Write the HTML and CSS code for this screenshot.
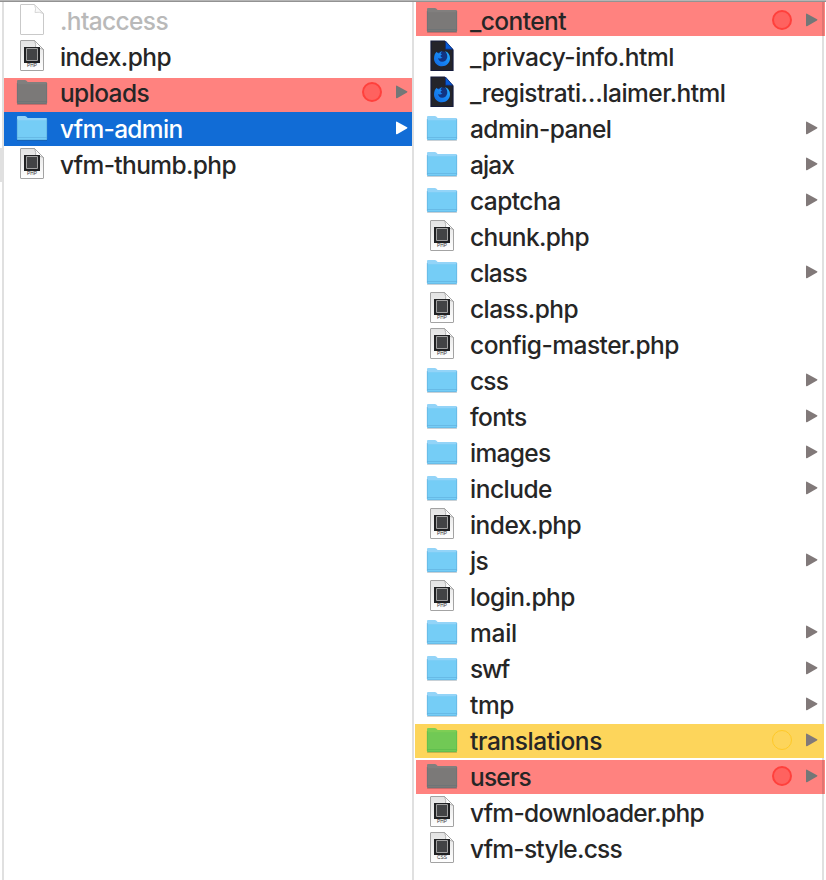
FILE: index.html
```
<!DOCTYPE html>
<html lang="en">
<head>
<meta charset="utf-8">
<title>Files</title>
<link rel="stylesheet" href="styles.css">
</head>
<body>
<svg class="defs" aria-hidden="true">
  <defs>
    <linearGradient id="paper" x1="0" y1="0" x2="0" y2="1"><stop offset="0" stop-color="#e2e2e2"/><stop offset="1" stop-color="#fff"/></linearGradient>
    <linearGradient id="flame" x1="1" y1="0" x2="0" y2="1"><stop offset="0" stop-color="#28b4ff"/><stop offset=".5" stop-color="#1685f4"/><stop offset="1" stop-color="#1267df"/></linearGradient>
    <symbol id="folder" viewBox="0 0 32 36">
      <path class="shade" d="M1 31.500h30v1.300H1z"/>
      <path class="tab" d="M1 31V9Q1 8 2 8h6.800q1 0 1.700.7l1.200 1.300H30q1 0 1 1v20z"/>
      <path class="front" d="M1 12.300h30v18.900q0 .8-1 .8H2q-1 0-1-.8z"/>
      <path class="edge" d="M1 29.500h30M1.500 31.700h29M30.700 11v20M1.300 11v20"/>
    </symbol>
    <symbol id="blank" viewBox="0 0 32 36">
      <path d="M4.500 5q0-.5.500-.5h13.500l9 9V34q0 .5-.5.5H5q-.5 0-.5-.5z" fill="#fff" stroke="#c9c9c9"/>
      <path d="M18.500 4.500q2 4.500.500 8 4.500-1 8 1z" fill="#fafafa" stroke="#d2d2d2" stroke-width=".9"/>
    </symbol>
    <symbol id="doc" viewBox="0 0 32 36">
      <path d="M4.500 5q0-.5.500-.5h13.500l9 9V34q0 .5-.5.5H5q-.5 0-.5-.5z" fill="url(#paper)" stroke="#989898" stroke-width=".9"/>
      <path d="M18.500 4.500q2 4 1 8 4.500-1 8 1z" fill="#fff" stroke="#999" stroke-width=".7"/>
      <path d="M8 11h16v16H8z" fill="#202123"/>
      <path d="M10.500 12.500h11v12h-11z" fill="#424345" stroke="#a2a2a2" stroke-width="1"/>
    </symbol>
    <symbol id="firefox" viewBox="0 0 32 36">
      <path d="M5 5h13.500l8.500 9v20.500H5z" fill="#24242a" stroke="#151b3c" stroke-width="1.200"/>
      <path d="M19.500 5v8.200h7.200z" fill="#075bd8" stroke="#102b77" stroke-width=".7"/>
      <circle cx="16" cy="22.300" r="7" fill="#123482"/>
      <path d="M16 15q-2 1-3 2.500-1.500-.3-2.200-1.800Q8 18 8 22.500c0 4.500 3.600 7.800 8 7.800s8-3.400 8-8c0-4-2.500-6.500-5-7.300 2 2.300 2.600 4.500 2.200 6.500-.6 3-2.900 4.500-5.200 4.300-2.300-.2-3.900-1.900-3.900-3.800 1.500.8 2.700.8 4.400-.4-1.500-.5-2.200-1.200-1.800-2.300l1.300-1-1.500-.8z" fill="url(#flame)"/>
    </symbol>
    <symbol id="arrow" viewBox="0 0 13 14"><path d="M1 1.200Q1 .2 2 .7l10 5.500q1 .6 0 1.200L2 13.200q-1 .4-1-.6z"/></symbol>
  </defs>
</svg>
<main class="browser">
  <div class="gutter"></div>
  <ul class="column" id="root"></ul>
  <ul class="column second" id="admin"></ul>
</main>
<script src="files.js"></script>
</body>
</html>
```
FILE: styles.css
```
* { box-sizing: border-box; }
body {
  margin: 0;
  width: 826px;
  height: 880px;
  overflow: hidden;
  background: #fff;
  color: #262626;
  font: 450 24.5px/36px Inter, "Liberation Sans", sans-serif;
}
.defs { position: absolute; width: 0; height: 0; }
.browser {
  display: grid;
  grid-template-columns: 4px 410px 410px;
  height: 880px;
  border-top: 2px solid #b5b5b5;
  position: relative;
}
.browser::before {
  content: "";
  position: absolute;
  top: -1px;
  left: 0;
  width: 826px;
  height: 1px;
  background: #929292;
}
.gutter {
  border-right: 2px solid #e0e0e0;
  background: linear-gradient(#e0e0e0, #e0e0e0) 0 146px / 2px 34px no-repeat;
}
.column {
  list-style: none;
  margin: 0;
  padding: 0;
  border-right: 2px solid #e0e0e0;
}
.row {
  --band-top: 2px;
  --band-left: 0px;
  --band-right: 0px;
  position: relative;
  display: flex;
  height: 36px;
  padding-left: 12px;
}
.row::before {
  content: "";
  position: absolute;
  z-index: -1;
  top: var(--band-top);
  left: var(--band-left);
  right: var(--band-right);
  height: 34px;
  background: var(--band, none);
}
.second .row { --band-left: 2px; }
.row.red { --band: #ff827f; }
.row.yellow { --band: #fdd55b; }
.row.blue { --band: #116cd6; color: #fff; font-weight: 530; }
.second .band-first { --band-top: 0px; }
.band-low { --band-top: 4px; }
.second .band-wide { --band-left: 1px; --band-right: -2px; }
.second .band-wide::before { z-index: 0; }
.second .band-wide > * { position: relative; }
.second .red { --band-right: -3px; }
.second .red::after {
  content: "";
  position: absolute;
  right: -2px;
  top: var(--band-top);
  width: 2px;
  height: 34px;
  background: #e07572;
}
.icon {
  display: block;
  flex: none;
  width: 32px;
  height: 36px;
  margin-top: -2px;
}
.file-icon { position: relative; flex: none; width: 32px; height: 36px; }
.file-icon .ext {
  position: absolute;
  left: 0;
  top: 24px;
  width: 32px;
  text-align: center;
  font: 400 4.8px/8px "Liberation Sans", sans-serif;
  color: #333;
}
.folder { --tab: #93d4f8; --front: #75cdf6; --edge: #5eaddb; }
.folder.grey { --tab: #817f7e; --front: #7b7978; --edge: #687076; }
.folder.green { --tab: #7dce55; --front: #71c955; --edge: #55b84b; }
.tab { fill: var(--tab); }
.front { fill: var(--front); }
.edge { fill: none; stroke: var(--edge); stroke-width: .6; }
.shade { fill: #0003; }
.name {
  flex: 1;
  margin-left: 12px;
  padding-top: 1px;
  white-space: nowrap;
}
.faded .name { color: #b9b9b9; }
.tag {
  flex: none;
  width: 20px;
  height: 20px;
  margin: 8px 13px 0 0;
  border: 2px solid #ff403c;
  border-radius: 50%;
  background: #ff625f;
}
.yellow .tag { border: 1px solid #ffc928; background: none; }
.arrow {
  flex: none;
  width: 13px;
  height: 14px;
  margin: 11px 4px 0 0;
  fill: #817979;
}
.red .arrow { fill: #737777; }
.blue .arrow { fill: #fff; }
```
FILE: files.js
```
// name, kind, width of the label in px, row classes
const root = [
  [".htaccess", "blank", 108, "faded"],
  ["index.php", "php", 111, ""],
  ["uploads", "folder", 89, "red band-low"],
  ["vfm-admin", "folder", 122.500, "blue"],
  ["vfm-thumb.php", "php", 176, ""]
];
const admin = [
  ["_content", "folder", 96, "red band-first"],
  ["_privacy-info.html", "firefox", 204, ""],
  ["_registrati…laimer.html", "firefox", 255.500, ""],
  ["admin-panel", "folder", 141.500, ""],
  ["ajax", "folder", 44, ""],
  ["captcha", "folder", 90.500, ""],
  ["chunk.php", "php", 119, ""],
  ["class", "folder", 57, ""],
  ["class.php", "php", 108, ""],
  ["config-master.php", "php", 209, ""],
  ["css", "folder", 38, ""],
  ["fonts", "folder", 56.500, ""],
  ["images", "folder", 80.500, ""],
  ["include", "folder", 82, ""],
  ["index.php", "php", 111, ""],
  ["js", "folder", 18, ""],
  ["login.php", "php", 105, ""],
  ["mail", "folder", 47, ""],
  ["swf", "folder", 39, ""],
  ["tmp", "folder", 44, ""],
  ["translations", "folder", 132, "yellow band-wide"],
  ["users", "folder", 61, "red"],
  ["vfm-downloader.php", "php", 234, ""],
  ["vfm-style.css", "css", 152, ""]
];

function icon(kind, classes) {
  if (kind === "folder") {
    const tone = classes.includes("red") ? "grey" : classes.includes("yellow") ? "green" : "";
    return `<svg class="icon folder ${tone}"><use href="#folder"/></svg>`;
  }
  if (kind === "php" || kind === "css") {
    return `<span class="file-icon"><svg class="icon"><use href="#doc"/></svg><span class="ext">${kind.toUpperCase()}</span></span>`;
  }
  return `<svg class="icon"><use href="#${kind}"/></svg>`;
}

function fill(id, files) {
  const list = document.getElementById(id);
  for (const [name, kind, width, classes] of files) {
    const tag = /red|yellow/.test(classes) ? '<i class="tag"></i>' : "";
    const arrow = kind === "folder" ? '<svg class="arrow"><use href="#arrow"/></svg>' : "";
    list.insertAdjacentHTML("beforeend",
      `<li class="row ${classes}">${icon(kind, classes)}<span class="name"><span>${name}</span></span>${tag}${arrow}</li>`);
    const label = list.lastElementChild.querySelector(".name span");
    const natural = label.getBoundingClientRect().width;
    label.style.letterSpacing = (width - natural) / name.length + "px";
  }
}
fill("root", root);
fill("admin", admin);
```
